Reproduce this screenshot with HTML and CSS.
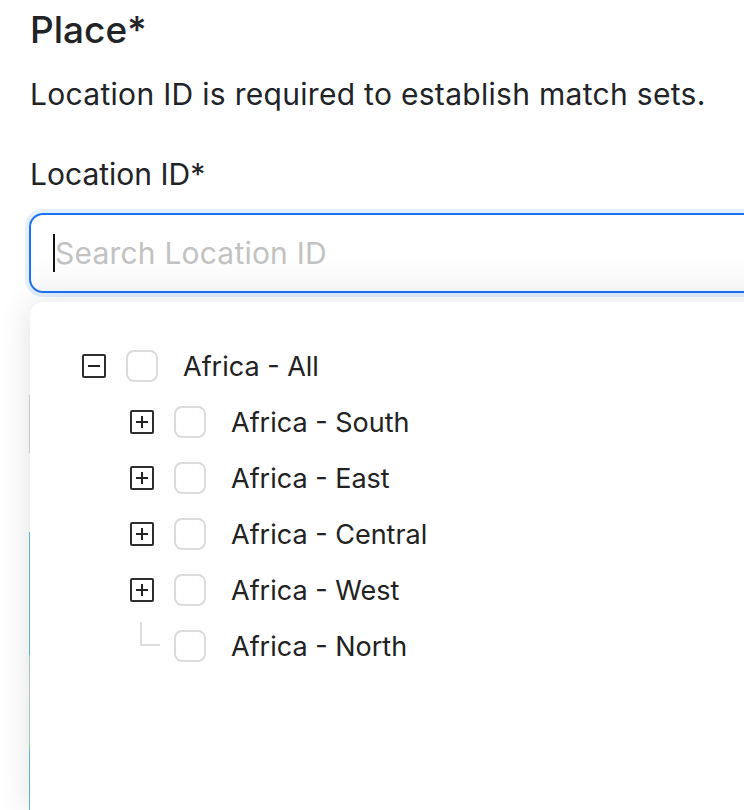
FILE: index.html
```html
<!DOCTYPE html>
<html lang="en">
<head>
  <meta charset="UTF-8">
  <meta name="viewport" content="width=device-width, initial-scale=1.0">
  <title>Place</title>
  <link rel="stylesheet" href="styles.css">
</head>
<body>
  <div class="form">
    <h2 class="section-title">Place*</h2>
    <p class="hint">Location ID is required to establish match sets.</p>
    <label class="field-label">Location ID*</label>
    <div class="search-box">
      <span class="caret"></span>
      <span class="placeholder">Search Location ID</span>
    </div>

    <div class="dropdown">
      <div class="tree-row">
        <span class="toggle">
          <svg viewBox="0 0 20 20" width="20" height="20"><path d="M4 10h12" stroke="#222" stroke-width="2"/></svg>
        </span>
        <span class="check"></span>
        <span class="tree-label">Africa - All</span>
      </div>
      <div class="tree-row child">
        <span class="toggle">
          <svg viewBox="0 0 20 20" width="20" height="20"><path d="M4 10h12M10 4v12" stroke="#222" stroke-width="2"/></svg>
        </span>
        <span class="check"></span>
        <span class="tree-label">Africa - South</span>
      </div>
      <div class="tree-row child">
        <span class="toggle">
          <svg viewBox="0 0 20 20" width="20" height="20"><path d="M4 10h12M10 4v12" stroke="#222" stroke-width="2"/></svg>
        </span>
        <span class="check"></span>
        <span class="tree-label">Africa - East</span>
      </div>
      <div class="tree-row child">
        <span class="toggle">
          <svg viewBox="0 0 20 20" width="20" height="20"><path d="M4 10h12M10 4v12" stroke="#222" stroke-width="2"/></svg>
        </span>
        <span class="check"></span>
        <span class="tree-label">Africa - Central</span>
      </div>
      <div class="tree-row child">
        <span class="toggle">
          <svg viewBox="0 0 20 20" width="20" height="20"><path d="M4 10h12M10 4v12" stroke="#222" stroke-width="2"/></svg>
        </span>
        <span class="check"></span>
        <span class="tree-label">Africa - West</span>
      </div>
      <div class="tree-row child">
        <span class="leaf-line">
          <svg viewBox="0 0 24 56" width="24" height="56"><path d="M11 4v23h19" fill="none" stroke="#dcdcdc" stroke-width="2"/></svg>
        </span>
        <span class="check"></span>
        <span class="tree-label">Africa - North</span>
      </div>
    </div>
  </div>
</body>
</html>
```

FILE: styles.css
```css
* {margin: 0; padding: 0; box-sizing: border-box;}
body {
  font-family: 'Inter', 'Noto Sans', sans-serif;
  color: #212327;
  background: #fff;
  overflow: hidden;
  height: 810px;
}
.form {
  width: 820px;
  padding: 7px 0 0 30px;
  display: flex;
  flex-direction: column;
  height: 810px;
}
.section-title {
  font-size: 37px;
  line-height: 46px;
  font-weight: 500;
}
.hint {
  font-size: 30px;
  line-height: 36px;
  letter-spacing: 0.3px;
  margin-top: 23px;
}
.field-label {
  font-size: 30px;
  line-height: 36px;
  margin-top: 44px;
}
.search-box {
  margin: 21px 0 0 -1px;
  height: 80px;
  border: 2px solid #1a73f2;
  border-radius: 14px;
  box-shadow: 0 0 0 4px #e4eefc;
  background: linear-gradient(#fff 50%, #f9f9f9);
  display: flex;
  align-items: center;
  padding-left: 22px;
  font-size: 30px;
  line-height: 36px;
}
.caret {
  width: 2px;
  height: 38px;
  background: #111;
}
.placeholder {
  color: #c2c2c2;
  letter-spacing: 0.2px;
}
.dropdown {
  position: relative;
  flex: 1;
  margin-top: 9px;
  background: #fff;
  border-radius: 14px 0 0 0;
  box-shadow: -2px 0 32px rgba(0,0,0,0.11);
  padding: 36px 0 0 52px;
}
.dropdown::before {
  content: "";
  position: absolute;
  left: -1px;
  top: 93px;
  bottom: 0;
  width: 1px;
  background: linear-gradient(#c8c8c8 0, #c8c8c8 58px, transparent 58px, transparent 137px,
    #5ab4d8 137px, #5ab4d8 260px, #8fcfae 260px, #bdbdbd 300px, #8fcfae 312px, #8fcfae 350px,
    #5ab4d8 360px);
}
.tree-row {
  height: 56px;
  display: flex;
  align-items: center;
}
.tree-row.child {
  padding-left: 48px;
}
.toggle {
  width: 24px;
  height: 24px;
  border: 2px solid #2e2e2e;
  border-radius: 2px;
  display: flex;
  align-items: center;
  justify-content: center;
}
.leaf-line {
  width: 24px;
  height: 56px;
}
.leaf-line svg {
  overflow: visible;
  display: block;
}
.check {
  width: 32px;
  height: 32px;
  border: 2px solid #dcdcdc;
  border-radius: 8px;
  margin-left: 20px;
}
.tree-label {
  font-size: 27px;
  margin-left: 25px;
  color: #222;
}
```
